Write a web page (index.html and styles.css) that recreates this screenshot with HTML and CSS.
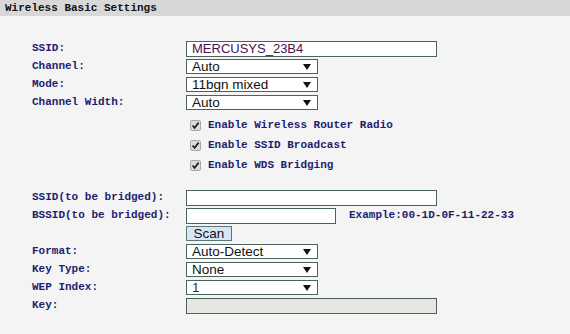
FILE: index.html
```html
<!DOCTYPE html>
<html>
<head>
<meta charset="utf-8">
<link rel="stylesheet" href="styles.css">
</head>
<body>
<div class="header">Wireless Basic Settings</div>
<div class="form">
  <div class="row"><span class="lbl">SSID:</span><input class="txt wide ssid" type="text" value="MERCUSYS_23B4"></div>
  <div class="row"><span class="lbl">Channel:</span><select class="sel"><option>Auto</option></select></div>
  <div class="row"><span class="lbl">Mode:</span><select class="sel"><option>11bgn mixed</option></select></div>
  <div class="row"><span class="lbl">Channel Width:</span><select class="sel"><option>Auto</option></select></div>

  <div class="checks">
    <label class="chk"><input type="checkbox" class="cb" checked><span>Enable Wireless Router Radio</span></label>
    <label class="chk"><input type="checkbox" class="cb" checked><span>Enable SSID Broadcast</span></label>
    <label class="chk"><input type="checkbox" class="cb" checked><span>Enable WDS Bridging</span></label>
  </div>

  <div class="bridge">
    <div class="row"><span class="lbl">SSID(to be bridged):</span><input class="txt wide" type="text"></div>
    <div class="row"><span class="lbl">BSSID(to be bridged):</span><input class="txt mid" type="text"><span class="example">Example:00-1D-0F-11-22-33</span></div>
    <div class="row"><span class="lbl"></span><button class="scan">Scan</button></div>
    <div class="row"><span class="lbl">Format:</span><select class="sel"><option>Auto-Detect</option></select></div>
    <div class="row"><span class="lbl">Key Type:</span><select class="sel"><option>None</option></select></div>
    <div class="row"><span class="lbl">WEP Index:</span><select class="sel wep"><option>1</option></select></div>
    <div class="row"><span class="lbl">Key:</span><input class="txt wide key" type="text" disabled></div>
  </div>
</div>
</body>
</html>
```

FILE: styles.css
```css
html, body {
  margin: 0;
  padding: 0;
  background: #f4f4f4;
  width: 570px;
  height: 334px;
  overflow: hidden;
}

.header {
  height: 16px;
  background: #d8d8d8;
  font-family: "Liberation Mono", monospace;
  font-weight: bold;
  font-size: 11px;
  line-height: 16px;
  color: #111;
  padding-left: 5px;
}

.form {
  padding-top: 25px;
  padding-left: 32px;
  display: flex;
  flex-direction: column;
}

.row {
  display: flex;
  align-items: flex-start;
  height: 15px;
  margin-bottom: 3px;
}

.lbl {
  width: 154px;
  flex: none;
  font-family: "Liberation Mono", monospace;
  font-weight: bold;
  font-size: 11px;
  color: #1e1e6e;
  line-height: 15px;
}

.txt, .sel, .scan {
  box-sizing: border-box;
  height: 15px;
  margin: 0;
  font-family: "Liberation Sans", Arial, sans-serif;
  font-size: 13.5px;
  line-height: 13px;
  border: 1px solid #4c625c;
  background: #fff;
  color: #111;
  outline: none;
}

.txt {
  height: 16px;
  font-size: 13px;
  line-height: 16px;
  padding: 0 0 0 5px;
  border-radius: 0;
}

.wide { width: 251px; }
.mid { width: 150px; }

.ssid { color: #46124e; }

.key {
  background: #e6e6e2;
}

.sel {
  width: 132px;
  padding: 0 0 0 5px;
  border-radius: 0;
  -webkit-appearance: none;
  appearance: none;
  background-color: #fff;
  background-image: url("data:image/svg+xml;utf8,<svg xmlns='http://www.w3.org/2000/svg' width='8' height='6'><polygon points='0,0 8,0 4,6' fill='%23111'/></svg>");
  background-repeat: no-repeat;
  background-position: right 6px center;
}

.wep { color: #3a3020; }

.example {
  margin-left: 13px;
  font-family: "Liberation Mono", monospace;
  font-weight: bold;
  font-size: 11px;
  line-height: 15px;
  color: #1e1e6e;
}

.checks {
  margin-top: 2px;
  margin-bottom: 15px;
  padding-left: 158px;
  display: flex;
  flex-direction: column;
}

.chk {
  height: 20px;
  display: flex;
  align-items: center;
  font-family: "Liberation Mono", monospace;
  font-weight: bold;
  font-size: 11px;
  color: #1e1e6e;
}

.cb {
  -webkit-appearance: none;
  appearance: none;
  width: 11px;
  height: 11px;
  margin: 0 7px 0 0;
  box-sizing: border-box;
  border: 1px solid #a8a8a8;
  border-radius: 2px;
  background-color: #dcdcdc;
  background-image: url("data:image/svg+xml;utf8,<svg xmlns='http://www.w3.org/2000/svg' width='9' height='9'><path d='M1.5 4.5 L3.6 6.8 L7.6 1.6' stroke='%23222' stroke-width='1.8' fill='none'/></svg>");
  background-repeat: no-repeat;
  background-position: center;
}

.bridge {
  display: flex;
  flex-direction: column;
}

.scan {
  width: 46px;
  padding: 0;
  background: #d6e6f6;
  border: 1px solid #5a7478;
  text-align: center;
  color: #111;
}
```
